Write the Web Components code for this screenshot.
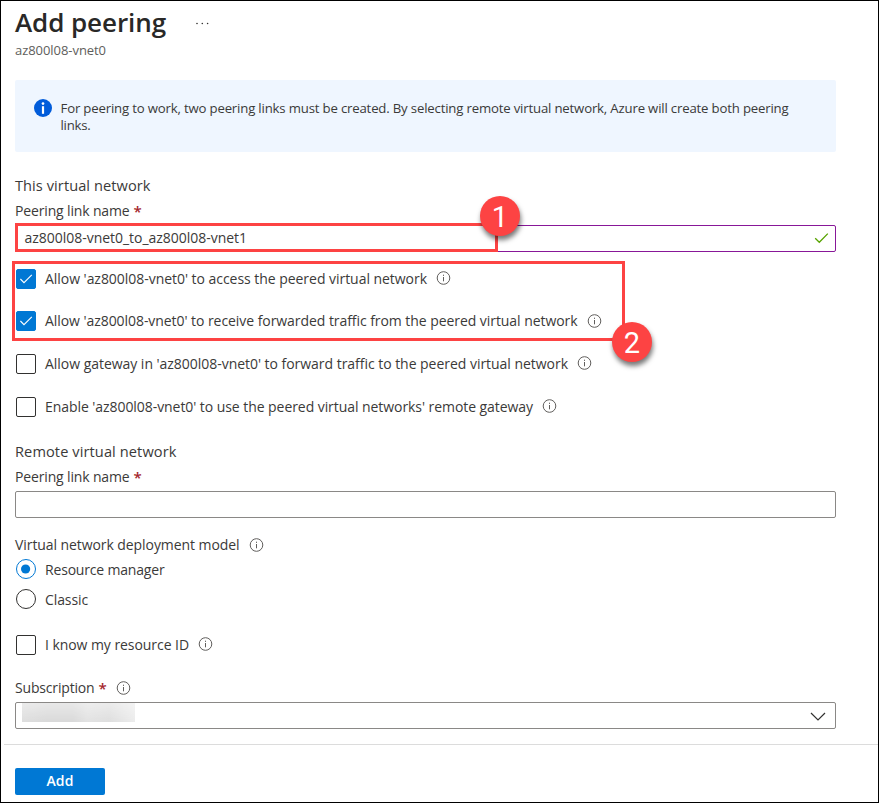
<!DOCTYPE html>
<html lang="en"><head><meta charset="utf-8"><title>Add peering</title>
<style>
html,body{margin:0;padding:0;background:#fff}
body{font-family:"Open Sans","Noto Sans",sans-serif;font-size:14px;line-height:20px;color:#3b3a39}
</style></head><body>
<peering-page></peering-page>
<script>
const define=(name,html,setup)=>customElements.define(name,class extends HTMLElement{
  connectedCallback(){
    if(this.shadowRoot)return;
    const t=document.createElement('template');t.innerHTML=html;
    this.attachShadow({mode:'open'}).append(t.content.cloneNode(true));
    if(setup)setup(this,this.shadowRoot);
  }
});

/* One line of text, tracked so that it spans the given width */
define('ui-text',`<style>:host{display:inline-block;white-space:nowrap;flex:none}</style><slot></slot>`,(el)=>{
  const w=+el.getAttribute('w');
  if(!w)return;
  const r=document.createRange();r.selectNodeContents(el);
  const n=el.textContent.length;
  el.style.letterSpacing=((w-r.getBoundingClientRect().width)/n)+'px';
});
define('info-icon',`<style>:host{display:block;flex:none;width:15px;height:15px}svg{display:block}</style>
<svg width="15" height="15" viewBox="0 0 15 15"><circle cx="7.5" cy="7" r="6.3" fill="none" stroke="#605e5c" stroke-width="1"/><path d="M7.5 6V10.3" stroke="#605e5c" stroke-width="1"/><path d="M7.5 3.7v1.2" stroke="#605e5c" stroke-width="1"/></svg>`);
define('required-mark',`<style>:host{display:block;color:#a4262c;font-weight:600;font-size:15px;margin-left:4px;line-height:20px}</style>*`);
define('info-banner',`<style>
:host{display:flex;box-sizing:border-box;height:72px;background:#eff6ff;border-radius:2px;padding:19px 0 0 19px;font-size:13.2px;line-height:17px}
svg{flex:none;display:block;margin-right:8.5px}.t{display:flex;flex-direction:column;align-items:flex-start;padding-top:1px}</style>
<svg width="18" height="18" viewBox="0 0 18 18"><circle cx="9" cy="9" r="9" fill="#015cda"/><circle cx="9" cy="4.6" r="1.35" fill="#fff"/><path d="M9 7.2V14.8" stroke="#fff" stroke-width="2.2"/></svg>
<div class="t"><slot></slot></div>`);
define('text-field',`<style>
:host{display:flex;box-sizing:border-box;height:27px;border:1px solid #8a8886;border-radius:2px;align-items:center;justify-content:space-between;padding:0 8px 1px 8.5px}
:host([changed]){border-color:#881798}svg{display:none}:host([changed]) svg{display:block;margin:0 -2px 0 0}</style>
<div><slot></slot></div><svg width="15" height="12" viewBox="0 0 15 12"><path d="M1.2 6.2 5.3 10.3 13.8 1.6" fill="none" stroke="#57a300" stroke-width="1.3"/></svg>`);
define('select-field',`<style>
:host{display:flex;box-sizing:border-box;height:27px;border:1px solid #8a8886;border-radius:2px;justify-content:space-between;align-items:flex-start;padding:0 9px 0 6px}
.v{width:113px;height:19px;background:linear-gradient(90deg,#dedede,#d9d9d9 22%,#d9d9d9 45%,#e2e2e2 58%,#dedede 77%,#ececec)}
.v{-webkit-mask-image:linear-gradient(#0009,#000)}svg{margin-top:9px}</style>
<div class="v"></div><svg width="16" height="10" viewBox="0 0 16 10"><path d="M1 1 8 8 15 1" fill="none" stroke="#323130" stroke-width="1.2"/></svg>`);
define('check-row',`<style>
:host{display:flex;height:20px;align-items:flex-start;padding-left:1px}
.b{box-sizing:border-box;flex:none;width:20px;height:20px;border:1px solid #323130;border-radius:2px;margin-right:9px}
:host([checked]) .b{background:#0078d4;border-color:#0078d4}
svg{display:none}:host([checked]) svg{display:block}::slotted(info-icon){margin:2px 0 0 9px}</style>
<div class="b"><svg width="18" height="18" viewBox="0 0 18 18"><path d="M3.4 9 7 12.7 14.8 4.9" fill="none" stroke="#fff" stroke-width="1.1"/></svg></div><slot></slot>`);
define('radio-row',`<style>
:host{display:flex;height:20px;padding-left:1px}svg{flex:none;margin-right:9px}
circle{fill:none;stroke:#323130}.dot{display:none}
:host([checked]) circle{stroke:#0078d4}:host([checked]) .dot{display:block;fill:#0078d4;stroke:none}
::slotted(ui-text){margin-top:1px}</style>
<svg width="20" height="20" viewBox="0 0 20 20"><circle cx="10" cy="10" r="9.5"/><circle class="dot" cx="9.6" cy="10" r="4.6"/></svg><slot></slot>`);
define('field-label',`<style>:host{display:flex;height:20px}::slotted(info-icon){margin:3px 0 0 9px}</style><slot></slot>`);
define('primary-button',`<style>:host{display:block}button{box-sizing:border-box;display:flex;align-items:center;justify-content:center;width:90px;height:27px;margin:0;padding:0 0 1px;background:#0078d4;color:#fff;border:0;border-radius:2px;font:600 14px/20px "Open Sans",sans-serif}</style><button><slot></slot></button>`);
define('call-out',`<style>
:host{position:absolute;box-sizing:border-box;border:3px solid #fd4343}
.n{position:absolute;width:40px;height:40px;border-radius:50%;background:#fd4343;color:#fff;font:29px/42px Roboto,"Liberation Sans",sans-serif;text-align:center;box-shadow:1px 4px 5px #0008}</style>
<div class="n"><slot></slot></div>`,(el,s)=>{
  const [x,y,w,h,nx,ny]=el.getAttribute('box').split(' ').map(Number);
  Object.assign(el.style,{left:x+'px',top:y+'px',width:w+'px',height:h+'px'});
  Object.assign(s.querySelector('.n').style,{left:nx-x-3+'px',top:ny-y-3+'px'});
});
define('peering-page',`<style>
:host{display:block;position:relative;box-sizing:border-box;width:879px;height:803px;border:1px solid #000;background:#fff;overflow:hidden}
main{display:flex;flex-direction:column;padding:4px 42px 0 14px}
header{display:flex;height:34px;font-size:26px;font-weight:600;line-height:34px;color:#292827}
header svg{margin:17px 0 0 30px}
.sub{height:20px;font-size:13px;color:#605e5c;margin-top:1px}
h2{margin:0;font-size:14.6px;font-weight:400;height:20px;line-height:20px}
footer{margin-top:15px;border-top:1px solid #dcdcdc;margin-left:3px;padding:23px 0 0 11px}
</style>
<main>
<header><ui-text w="151">Add peering</ui-text><svg width="13" height="3" viewBox="0 0 13 3" fill="#323130"><circle cx="1" cy="1.5" r=".8"/><circle cx="6.3" cy="1.5" r=".8"/><circle cx="11.6" cy="1.5" r=".8"/></svg></header>
<div class="sub"><ui-text w="91">az800l08-vnet0</ui-text></div>
<info-banner style="margin-top:20px"><ui-text w="728">For peering to work, two peering links must be created. By selecting remote virtual network, Azure will create both peering</ui-text><ui-text w="30">links.</ui-text></info-banner>
<h2 style="margin-top:23px"><ui-text w="135.5">This virtual network</ui-text></h2>
<field-label style="margin-top:6px"><ui-text w="114.5">Peering link name</ui-text><required-mark></required-mark></field-label>
<text-field changed style="margin-top:4px"><ui-text w="222.5">az800l08-vnet0_to_az800l08-vnet1</ui-text></text-field>
<check-row checked style="margin-top:17px"><ui-text w="382">Allow 'az800l08-vnet0' to access the peered virtual network</ui-text><info-icon></info-icon></check-row>
<check-row checked style="margin-top:22px"><ui-text w="532.5">Allow 'az800l08-vnet0' to receive forwarded traffic from the peered virtual network</ui-text><info-icon style="margin-top:3px"></info-icon></check-row>
<check-row style="margin-top:23px"><ui-text w="523">Allow gateway in 'az800l08-vnet0' to forward traffic to the peered virtual network</ui-text><info-icon></info-icon></check-row>
<check-row style="margin-top:23px"><ui-text w="488">Enable 'az800l08-vnet0' to use the peered virtual networks' remote gateway</ui-text><info-icon></info-icon></check-row>
<h2 style="margin-top:24px"><ui-text w="161.5">Remote virtual network</ui-text></h2>
<field-label style="margin-top:6px"><ui-text w="114.5">Peering link name</ui-text><required-mark></required-mark></field-label>
<text-field style="margin-top:4px"></text-field>
<field-label style="margin-top:17px"><ui-text w="224.5">Virtual network deployment model</ui-text><info-icon></info-icon></field-label>
<radio-row checked style="margin-top:4px"><ui-text w="119.5">Resource manager</ui-text></radio-row>
<radio-row style="margin-top:10px"><ui-text w="43">Classic</ui-text></radio-row>
<check-row style="margin-top:26px"><ui-text w="144">I know my resource ID</ui-text><info-icon></info-icon></check-row>
<field-label style="margin-top:23px"><ui-text w="79.5">Subscription</ui-text><required-mark></required-mark><info-icon></info-icon></field-label>
<select-field style="margin-top:4px"></select-field>
</main>
<footer><primary-button><ui-text w="27">Add</ui-text></primary-button></footer>
<call-out box="14 222 483 29 479 195">1</call-out>
<call-out box="11 260 613 80 611 321">2</call-out>`);
</script>
</body></html>
